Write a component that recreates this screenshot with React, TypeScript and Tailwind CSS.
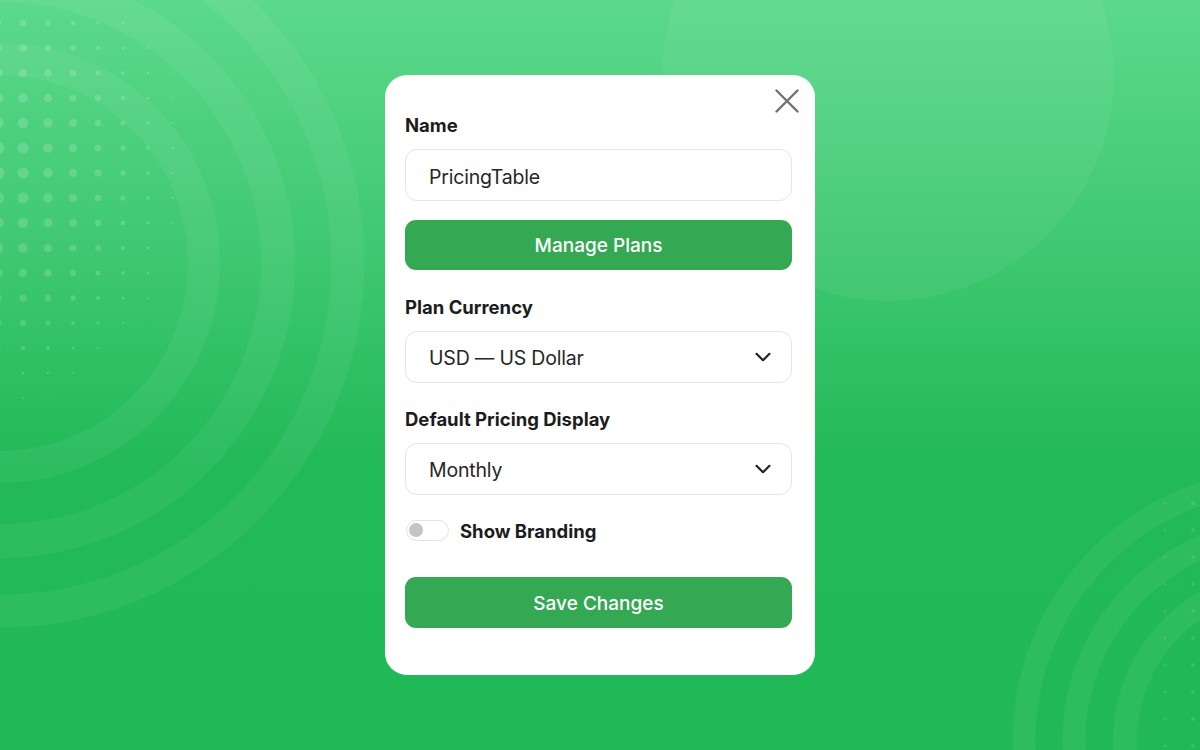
import { useState } from "react";

const dots: { x: number; y: number; r: number }[] = [];
for (let col = 0; col < 10; col++) {
  for (let row = 0; row < 18; row++) {
    const x = -2 + col * 25;
    const y = -2 + row * 25;
    const d = Math.hypot(x + 60, y - 170);
    const r = 8 * (1 - d / 275);
    if (r > 0.4) dots.push({ x, y, r: Math.min(r, 6.5) });
  }
}

function Backdrop() {
  return (
    <svg
      className="absolute inset-0 pointer-events-none"
      width="1200"
      height="750"
      viewBox="0 0 1200 750"
    >
      <g fill="none" stroke="#ffffff" strokeOpacity="0.055">
        <circle cx="0" cy="263" r="204" strokeWidth="32" />
        <circle cx="0" cy="263" r="278" strokeWidth="34" />
        <circle cx="0" cy="263" r="348" strokeWidth="33" />
        <circle cx="1285" cy="741" r="160" strokeWidth="24" />
        <circle cx="1285" cy="741" r="211" strokeWidth="23" />
        <circle cx="1285" cy="741" r="261" strokeWidth="23" />
      </g>
      <circle cx="888" cy="75" r="226" fill="#ffffff" fillOpacity="0.05" />
      <g fill="#ffffff" fillOpacity="0.16">
        {dots.map((d, i) => (
          <circle key={i} cx={d.x} cy={d.y} r={d.r} />
        ))}
      </g>
      <g fill="#ffffff" fillOpacity="0.1">
        {Array.from({ length: 10 }).map((_, i) => (
          <g key={i}>
            <circle cx="1165" cy={503 + i * 27} r="1.5" />
            <circle cx="1193" cy={503 + i * 27} r="2" />
          </g>
        ))}
      </g>
    </svg>
  );
}

function Chevron() {
  return (
    <svg width="16" height="10" viewBox="0 0 16 10" fill="none">
      <path
        d="M1.5 1.8 8 8.2l6.5-6.4"
        stroke="#1f2328"
        strokeWidth="2.2"
        strokeLinecap="round"
        strokeLinejoin="round"
      />
    </svg>
  );
}

function SelectBox({ value }: { value: string }) {
  return (
    <button className="w-full h-[52px] flex items-center justify-between pl-[23px] pr-[20px] rounded-[12px] border-[1.5px] border-[#e4e4ea] bg-white text-[19.5px] tracking-[-0.01em] text-[#262626] text-left">
      <span className="pt-[3px]">{value}</span>
      <Chevron />
    </button>
  );
}

export default function App() {
  const [name, setName] = useState("PricingTable");
  const [branding, setBranding] = useState(false);

  return (
    <div
      className="relative w-full h-[750px] overflow-hidden bg-[linear-gradient(180deg,#5cd98b_0%,#3fc871_33%,#22b958_62%,#21b957_100%)]"
      style={{ fontFamily: "Inter, 'Noto Sans', sans-serif" }}
    >
      <Backdrop />
      <div className="relative h-full flex items-center justify-center">
        <div className="relative w-[430px] h-[600px] bg-white rounded-[22px] pl-5 pr-[23px] pt-[38px]">
          <button className="absolute top-[14px] right-[16px]" aria-label="Close">
            <svg width="24" height="24" viewBox="0 0 24 24" fill="none">
              <path d="M1.5 1.5 22.5 22.5M22.5 1.5 1.5 22.5" stroke="#707070" strokeWidth="2.4" strokeLinecap="round" />
            </svg>
          </button>

          <label className="block text-[18.5px] leading-6 font-bold text-[#1c1c1e] mb-3">
            Name
          </label>
          <input
            value={name}
            onChange={(e) => setName(e.target.value)}
            className="w-full h-[52px] px-[23px] pt-[3px] rounded-[12px] border-[1.5px] border-[#e4e4ea] text-[19.5px] tracking-[-0.01em] text-[#262626] outline-none"
          />
          <button className="mt-[19px] w-full h-[50px] pt-[3px] rounded-[11px] bg-[#34a853] text-white text-[19px] font-medium">
            Manage Plans
          </button>

          <label className="block mt-[25px] text-[18.5px] leading-6 font-bold text-[#1c1c1e] mb-3">
            Plan Currency
          </label>
          <SelectBox value="USD — US Dollar" />

          <label className="block mt-6 text-[18.5px] leading-6 font-bold text-[#1c1c1e] mb-3">
            Default Pricing Display
          </label>
          <SelectBox value="Monthly" />

          <div className="mt-[23px] h-6 flex items-center gap-[11px]">
            <button
              onClick={() => setBranding(!branding)}
              className="ml-px w-[43px] h-[21px] rounded-full border-[1.5px] border-[#e2e2e8] bg-white flex items-center px-[2px]"
              aria-label="Toggle branding"
            >
              <span className="w-[14px] h-[14px] rounded-full bg-[#c4c4c4]" />
            </button>
            <span className="pt-[3px] text-[18.5px] font-bold text-[#1c1c1e]">
              Show Branding
            </span>
          </div>

          <button className="mt-[35px] w-full h-[51px] pt-[4px] rounded-[11px] bg-[#34a853] text-white text-[19px] font-medium">
            Save Changes
          </button>
        </div>
      </div>
    </div>
  );
}
